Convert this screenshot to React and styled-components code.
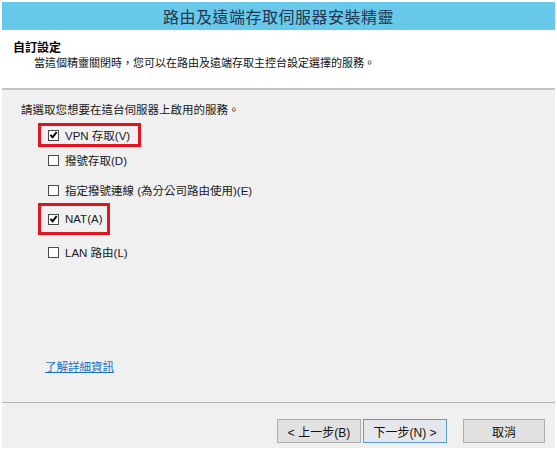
import React from 'react'
import styled, { createGlobalStyle } from 'styled-components';

const GlobalStyle = createGlobalStyle`
  body {
    margin: 0;
    background: #ffffff;
    font-family: "Liberation Sans", "Noto Sans CJK TC", sans-serif;
    font-size: 11.5px;
    color: #1a1a1a;
  }
`;

const options = [
  { label: 'VPN 存取(V)', checked: true, highlight: true, gap: 5, h: 24, padRight: 8 },
  { label: '撥號存取(D)', checked: false, gap: 1, h: 24 },
  { label: '指定撥號連線 (為分公司路由使用)(E)', checked: false, gap: 6, h: 24 },
  { label: 'NAT(A)', checked: true, highlight: true, gap: 1, h: 32, padRight: 5 },
  { label: 'LAN 路由(L)', checked: false, gap: 5, h: 24 },
];

const App = () => {
  return (
    <>
      <GlobalStyle />
      <Window>
        <TitleBar>路由及遠端存取伺服器安裝精靈</TitleBar>
        <Header>
          <HeaderTitle>自訂設定</HeaderTitle>
          <HeaderText>當這個精靈關閉時，您可以在路由及遠端存取主控台設定選擇的服務。</HeaderText>
        </Header>
        <Body>
          <Prompt>請選取您想要在這台伺服器上啟用的服務。</Prompt>
          {options.map((o) => (
            <Option key={o.label} $highlight={o.highlight} $gap={o.gap} $h={o.h} $padRight={o.padRight}>
              <Box>
                {o.checked && (
                  <svg width="10" height="10" viewBox="0 0 10 10">
                    <polyline points="1.5,4.8 4,7.5 8.5,1.8" fill="none" stroke="#000" strokeWidth="2.1" />
                  </svg>
                )}
              </Box>
              <span>{o.label}</span>
            </Option>
          ))}
          <Spacer />
          <MoreLink href="#">了解詳細資訊</MoreLink>
        </Body>
        <Footer>
          <Button>&lt; 上一步(B)</Button>
          <Button $primary>下一步(N) &gt;</Button>
          <Button $cancel>取消</Button>
        </Footer>
      </Window>
    </>
  )
}

const Window = styled.div`
  margin: 2px 0 0 2px;
  width: 553px;
  height: 446px;
  background: #f0f0f0;
  display: flex;
  flex-direction: column;
`;

const TitleBar = styled.div`
  height: 28px;
  background: #68c9ea;
  color: #1f3550;
  font-size: 16px;
  letter-spacing: 0.5px;
  display: flex;
  align-items: center;
  justify-content: center;
`;

const Header = styled.div`
  box-sizing: border-box;
  background: #ffffff;
  border-bottom: 2px solid #c4c4c4;
  padding: 10px 0 0 11px;
  height: 60px;
`;

const HeaderTitle = styled.div`
  font-weight: bold;
  font-size: 12px;
  line-height: 16px;
  color: #000;
`;

const HeaderText = styled.div`
  padding-left: 21px;
  font-size: 11px;
  line-height: 15px;
  color: #111;
`;

const Body = styled.div`
  flex: 1;
  display: flex;
  flex-direction: column;
  padding: 12px 0 28px 0;
`;

const Prompt = styled.div`
  line-height: 16px;
  padding-left: 19px;
`;

const Option = styled.div`
  display: flex;
  align-items: center;
  gap: 6px;
  box-sizing: border-box;
  width: fit-content;
  height: ${(p) => p.$h}px;
  margin: ${(p) => p.$gap}px 0 0 ${(p) => (p.$highlight ? 36 : 37)}px;
  padding: 0 ${(p) => p.$padRight || 4}px 0 ${(p) => (p.$highlight ? 7 : 6)}px;
  border: 3px solid ${(p) => (p.$highlight ? '#e2141f' : 'transparent')};
`;

const Box = styled.span`
  width: 11px;
  height: 11px;
  box-sizing: border-box;
  border: 1px solid #4a4a4a;
  background: #fff;
  display: flex;
  align-items: center;
  justify-content: center;
`;

const Spacer = styled.div`
  flex: 1;
`;

const MoreLink = styled.a`
  margin-left: 43px;
  color: #1a6fc9;
  text-decoration: underline;
  line-height: 14px;
`;

const Footer = styled.div`
  border-top: 1px solid #b4b4b4;
  display: flex;
  justify-content: flex-end;
  align-items: flex-start;
  padding: 16px 10px 0 0;
  height: 46px;
  box-sizing: border-box;
`;

const Button = styled.button`
  font-family: inherit;
  font-size: 12px;
  color: #111;
  width: ${(p) => (p.$cancel ? 82 : 84)}px;
  height: 24px;
  margin-left: ${(p) => (p.$cancel ? 16 : p.$primary ? 2 : 0)}px;
  background: ${(p) => (p.$primary ? '#e4e8ec' : '#e1e1e1')};
  border: 1px solid ${(p) => (p.$primary ? '#5b9bd5' : '#adadad')};
  padding: 0;
`;

export default App;
